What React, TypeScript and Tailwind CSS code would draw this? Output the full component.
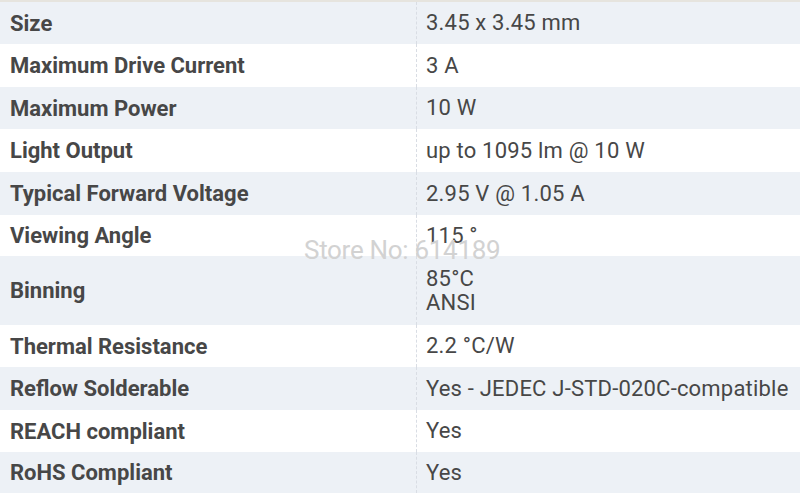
const rows: { label: string; value: string[]; h: string; shade: boolean }[] = [
  { label: "Size", value: ["3.45 x 3.45 mm"], h: "h-[42px]", shade: true },
  { label: "Maximum Drive Current", value: ["3 A"], h: "h-[43px]", shade: false },
  { label: "Maximum Power", value: ["10 W"], h: "h-[42px]", shade: true },
  { label: "Light Output", value: ["up to 1095 lm @ 10 W"], h: "h-[43px]", shade: false },
  { label: "Typical Forward Voltage", value: ["2.95 V @ 1.05 A"], h: "h-[43px]", shade: true },
  { label: "Viewing Angle", value: ["115 °"], h: "h-[41px]", shade: false },
  { label: "Binning", value: ["85°C", "ANSI"], h: "h-[69px]", shade: true },
  { label: "Thermal Resistance", value: ["2.2 °C/W"], h: "h-[42px]", shade: false },
  { label: "Reflow Solderable", value: ["Yes - JEDEC J-STD-020C-compatible"], h: "h-[43px]", shade: true },
  { label: "REACH compliant", value: ["Yes"], h: "h-[42px]", shade: false },
  { label: "RoHS Compliant", value: ["Yes"], h: "h-[41px]", shade: true },
];

export default function App() {
  return (
    <div className="relative w-[800px] h-[500px] bg-white overflow-hidden text-[#474747]" style={{ fontFamily: "Roboto, 'Liberation Sans', sans-serif" }}>
      <div className="h-[2px] bg-[#e6e4de]" />
      {rows.map((r) => (
        <div key={r.label} className={`flex ${r.h} ${r.shade ? "bg-[#edf1f6]" : "bg-white"}`}>
          <div className="w-[416px] flex items-center pl-[10px] font-bold text-[22px] whitespace-nowrap">
            {r.label}
          </div>
          <div className="border-l border-dashed border-[#d9dde4]" />
          <div className="flex-1 flex flex-col justify-center pl-[9px] text-[22px] leading-[24px] whitespace-nowrap tracking-[0.2px]">
            {r.value.map((v) => (
              <span key={v}>{v}</span>
            ))}
          </div>
        </div>
      ))}
      {/* watermark over the table */}
      <div className="absolute left-[304px] top-[231px] text-[26px] text-[#d2d2d2] tracking-[-0.3px] pointer-events-none">
        Store No: 614189
      </div>
    </div>
  );
}
